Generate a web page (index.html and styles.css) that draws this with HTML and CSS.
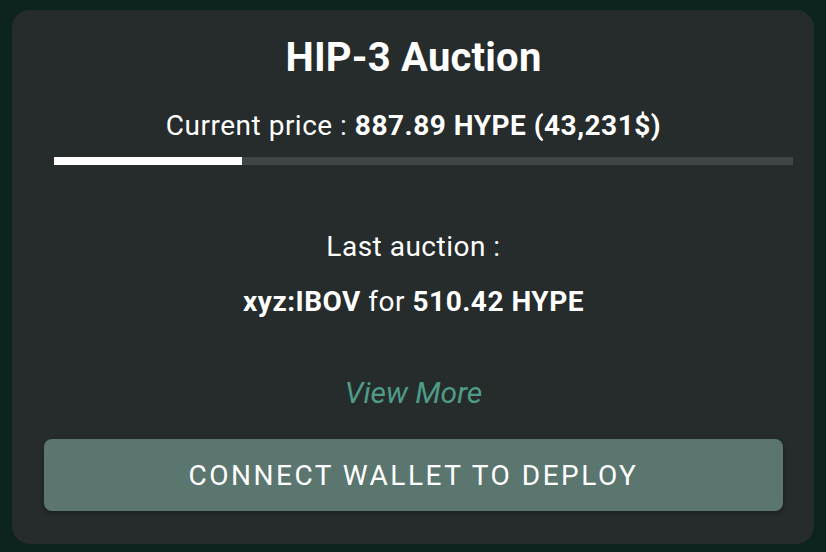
FILE: index.html
```html
<!DOCTYPE html>
<html lang="en">
<head>
    <meta charset="UTF-8">
    <meta name="viewport" content="width=device-width, initial-scale=1.0">
    <title>HIP-3 Auction</title>
    <link rel="stylesheet" href="styles.css">
</head>
<body>
    <div class="card">
        <h1 class="title">HIP-3 Auction</h1>
        <p class="price">Current price : <b>887.89 HYPE (43,231$)</b></p>
        <div class="progress">
            <div class="progress-fill" style="width: 25.5%;"></div>
        </div>

        <div class="last">
            <p class="last-label">Last auction :</p>
            <p class="last-value"><b>xyz:IBOV</b> for <b>510.42 HYPE</b></p>
        </div>

        <a class="view-more" href="#">View More</a>

        <button class="connect">Connect wallet to deploy</button>
    </div>
</body>
</html>
```

FILE: styles.css
```css
body {
    margin: 0;
    background: #0d231e;
    font-family: 'Roboto', 'Liberation Sans', sans-serif;
    color: #ffffff;
}
.card {
    margin: 10px 12px 8px 12px;
    background: #262b2b;
    border-radius: 18px;
    height: 534px;
    padding: 0 31px 0 32px;
    box-sizing: border-box;
    display: flex;
    flex-direction: column;
    align-items: center;
    text-align: center;
}
.title {
    margin: 24px 0 0 0;
    font-size: 40px;
    font-weight: 700;
    line-height: 48px;
    letter-spacing: 0.2px;
}
.price {
    margin: 28px 0 0 0;
    font-size: 28px;
    line-height: 32px;
    letter-spacing: 0.5px;
}
.price b {
    font-weight: 700;
}
.progress {
    align-self: stretch;
    margin: 15px -10px 0 10px;
    height: 8px;
    background: #404545;
}
.progress-fill {
    height: 100%;
    background: #ffffff;
}
.last {
    margin-top: 66px;
}
.last-label {
    margin: 0;
    font-size: 28px;
    line-height: 32px;
    letter-spacing: 0.5px;
}
.last-value {
    margin: 23px 0 0 0;
    font-size: 28px;
    line-height: 32px;
    letter-spacing: 0.5px;
}
.view-more {
    margin-top: 59px;
    font-size: 30px;
    line-height: 32px;
    font-style: italic;
    color: #4e9c88;
    text-decoration: none;
}
.connect {
    align-self: stretch;
    margin-top: 30px;
    height: 72px;
    border: none;
    border-radius: 8px;
    background: #5b766e;
    color: #ffffff;
    font-family: inherit;
    font-size: 28px;
    font-weight: 400;
    text-transform: uppercase;
    letter-spacing: 2.5px;
    box-shadow: 0 2px 4px rgba(0, 0, 0, 0.3);
    cursor: pointer;
}
```
